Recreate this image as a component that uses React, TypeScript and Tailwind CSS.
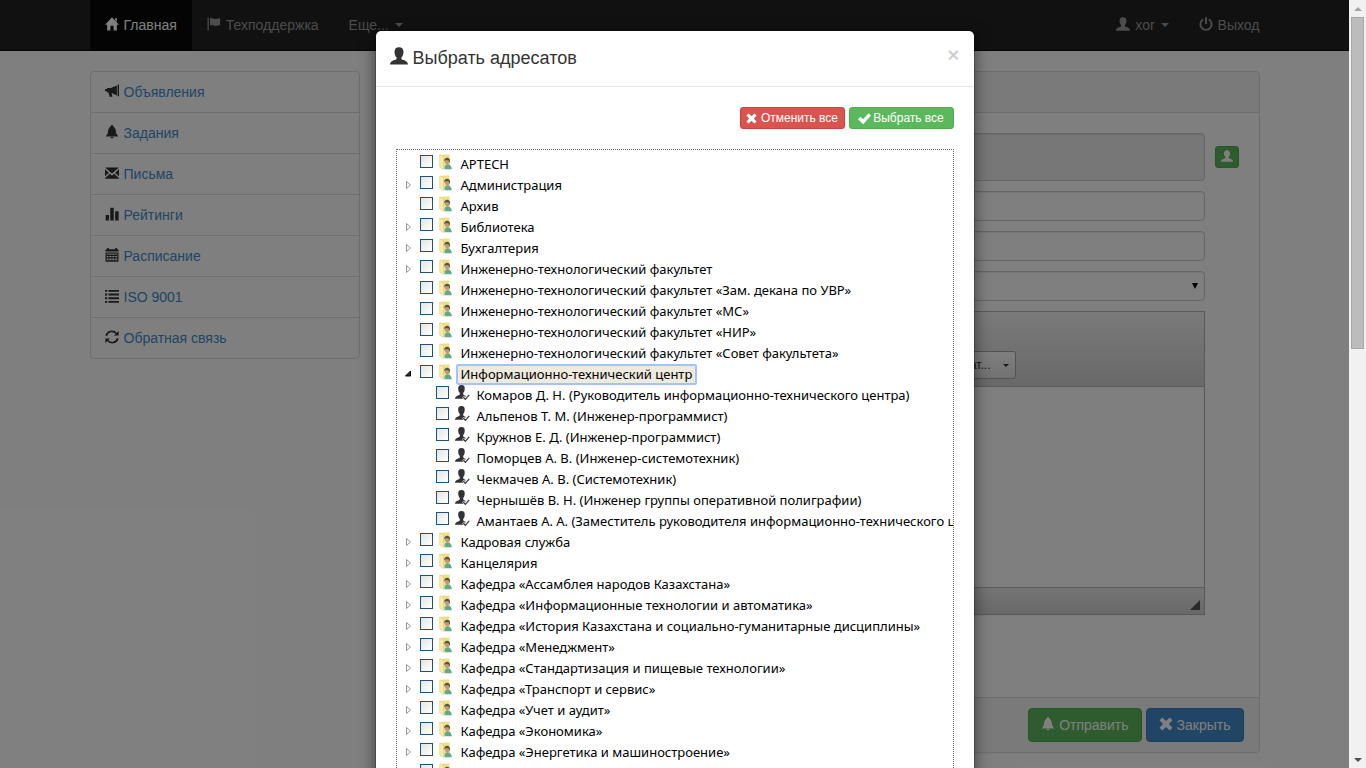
import React, { ReactNode } from "react";

const paths: Record<string, ReactNode> = {
  home: <path d="M8 0.2 16 8.8H13.6V15.4H9.8V10H6.2V15.4H2.4V8.8H0Z M11.4 1.4H13.6V5.6L11.4 3.2Z" />,
  flag: <path d="M0.6 0.5H2V15.5H0.6Z M3.4 1.4C6 0 8 3 11 2.2 12.6 1.8 13.6 1.2 15 1.6V9.6C12.6 8.8 11.6 10.8 8.6 10 6.6 9.4 5 8.6 3.4 10Z" />,
  user: <path d="M8 0.2C10.8 0.2 12 2 12 4.4 12 6.6 11.2 8.2 10.2 9.2V10.6C10.4 11.6 16 11.6 16 15.6H0C0 11.6 5.6 11.6 5.8 10.6V9.2C4.8 8.2 4 6.6 4 4.4 4 2 5.2 0.2 8 0.2Z" />,
  off: <path fill="none" stroke="currentColor" strokeWidth="2.2" d="M4.8 2.8A6.4 6.4 0 1 0 11.2 2.8M8 0.4V8" />,
  horn: <path d="M14.4 0.6H16V14H14.4Z M13.6 1.6V13L7.6 10.4 8.6 14.6H5.2L4 9.8H2.4V8.4H0V5.6H2.4V4.6H6.6Z" />,
  bell: <path d="M8 0C9 0 9.4 0.8 9.4 1.6 12.4 2.8 12.2 6.6 12.8 9 13.2 10.8 15 11.6 15.2 13H0.8C1 11.6 2.8 10.8 3.2 9 3.8 6.6 3.6 2.8 6.6 1.6 6.6 0.8 7 0 8 0ZM6.4 13.8H9.6C9.4 16 6.6 16 6.4 13.8Z" />,
  mail: <path d="M0.2 1.6H15.8L8 8.6Z M0 3.6 4.4 7.6 0 11.8Z M16 3.6V11.8L11.6 7.6Z M5.6 8.8 8 11 10.4 8.8 15.8 13.6V14.6H0.2V13.6Z" />,
  bars: <path d="M0.8 9H4.6V15.4H0.8Z M6 0.8H10V15.4H6Z M11.6 4.8H15.6V15.4H11.6Z" />,
  calendar: <path fillRule="evenodd" d="M2.4 0H4.4V1.4H11.6V0H13.6V1.4H15.4V4H0.6V1.4H2.4Z M0.6 5H15.4V15.6H0.6Z M2 6.4V7.8H4V6.4Z M5 6.4V7.8H7.4V6.4Z M8.4 6.4V7.8H10.8V6.4Z M11.8 6.4V7.8H14V6.4Z M2 9V10.6H4V9Z M5 9V10.6H7.4V9Z M8.4 9V10.6H10.8V9Z M11.8 9V10.6H14V9Z M2 12V14H4V12Z M5 12V14H7.4V12Z M8.4 12V14H10.8V12Z M11.8 12V14H14V12Z" />,
  list: <path d="M0 1H2.6V3.2H0Z M4 1H16V3.2H4Z M0 5.2H2.6V7.4H0Z M4 5.2H16V7.4H4Z M0 9.4H2.6V11.6H0Z M4 9.4H16V11.6H4Z M0 13.6H2.6V15.8H0Z M4 13.6H16V15.8H4Z" />,
  refresh: (
    <>
      <path fill="none" stroke="currentColor" strokeWidth="2" d="M1.4 6.6C2.6 1 9.6 0 13 4M14.6 9.4C13.4 15 6.4 16 3 12" />
      <path d="M15.6 1.2V6.4H10.2Z M0.4 14.8V9.6H5.8Z" />
    </>
  ),
  remove: <path d="M3.8 0.6 8 4.6 12.2 0.6 15.4 3.8 11.4 8 15.4 12.2 12.2 15.4 8 11.4 3.8 15.4 0.6 12.2 4.6 8 0.6 3.8Z" />,
  ok: <path d="M0 8.8 3 5.8 6.2 8.8 13 1.4 16 4.4 6.4 15Z" />,
};

function Icon({ name, className = "size-3.5" }: { name: string; className?: string }) {
  return (
    <svg viewBox="0 0 16 16" fill="currentColor" aria-hidden="true" className={`${className} shrink-0`}>
      {paths[name]}
    </svg>
  );
}

function Caret() {
  return <span className="ml-1.5 border-x-4 border-t-4 border-x-transparent border-t-current" />;
}

function GroupIcon() {
  return (
    <svg viewBox="0 0 16 16" className="size-4 shrink-0" aria-hidden="true">
      <path d="M2 1.4 4 0.6H10.6V13H4Z" fill="#efdf8c" />
      <path d="M0.8 0.8 4.4 2.6V15.6L0.8 13Z" fill="#f8eeb0" stroke="#dcc66a" strokeWidth="0.6" />
      <path d="M5.4 15.2C5 12 6.4 10.6 8.6 10.2 11.4 10.4 12.8 12.8 12.8 15.2Z" fill="#62a98a" />
      <ellipse cx="8.3" cy="7.6" rx="2.3" ry="2.8" fill="#c09a78" />
      <path d="M5.4 7.6C5 4.4 7 3.6 8.4 3.7 10.8 4 11.6 6 10.8 9L9.8 6.4 7 6Z" fill="#55543f" />
    </svg>
  );
}

function PersonIcon() {
  return (
    <svg viewBox="0 0 16 16" className="size-4 shrink-0" aria-hidden="true">
      <path d="M6.4 0C9 0 9.9 1.6 9.7 4 9.6 6 9 7.2 8.2 8V9.2C8.6 10 9.6 10.4 10.6 10.8L10.4 12 8.6 11 7.2 12.4 8.4 13.8H0C0 10.4 4.8 10.6 4.8 9.2V8C4 7.2 3.3 6 3.2 4 3 1.6 4 0 6.4 0Z" fill="#333" />
      <path d="M8.2 12 10.4 14.4 14.2 9.8" fill="none" stroke="#333" strokeWidth="1.2" />
    </svg>
  );
}

const menu = [
  ["horn", "Объявления"],
  ["bell", "Задания"],
  ["mail", "Письма"],
  ["bars", "Рейтинги"],
  ["calendar", "Расписание"],
  ["list", "ISO 9001"],
  ["refresh", "Обратная связь"],
];

type Kind = "leaf" | "closed" | "open" | "person";

const rows: [string, Kind][] = [
  ["APTECH", "leaf"],
  ["Администрация", "closed"],
  ["Архив", "leaf"],
  ["Библиотека", "closed"],
  ["Бухгалтерия", "closed"],
  ["Инженерно-технологический факультет", "closed"],
  ["Инженерно-технологический факультет «Зам. декана по УВР»", "leaf"],
  ["Инженерно-технологический факультет «МС»", "leaf"],
  ["Инженерно-технологический факультет «НИР»", "leaf"],
  ["Инженерно-технологический факультет «Совет факультета»", "leaf"],
  ["Информационно-технический центр", "open"],
  ["Комаров Д. Н. (Руководитель информационно-технического центра)", "person"],
  ["Альпенов Т. М. (Инженер-программист)", "person"],
  ["Кружнов Е. Д. (Инженер-программист)", "person"],
  ["Поморцев А. В. (Инженер-системотехник)", "person"],
  ["Чекмачев А. В. (Системотехник)", "person"],
  ["Чернышёв В. Н. (Инженер группы оперативной полиграфии)", "person"],
  ["Амантаев А. А. (Заместитель руководителя информационно-технического центра)", "person"],
  ["Кадровая служба", "closed"],
  ["Канцелярия", "closed"],
  ["Кафедра «Ассамблея народов Казахстана»", "closed"],
  ["Кафедра «Информационные технологии и автоматика»", "closed"],
  ["Кафедра «История Казахстана и социально-гуманитарные дисциплины»", "closed"],
  ["Кафедра «Менеджмент»", "closed"],
  ["Кафедра «Стандартизация и пищевые технологии»", "closed"],
  ["Кафедра «Транспорт и сервис»", "closed"],
  ["Кафедра «Учет и аудит»", "closed"],
  ["Кафедра «Экономика»", "closed"],
  ["Кафедра «Энергетика и машиностроение»", "closed"],
  ["", "closed"],
];

function TreeRow({ label, kind, index }: { label: string; kind: Kind; index: number }) {
  const id = `node-${index}`;
  return (
    <li className={`flex h-[21px] items-start ${kind === "person" ? "pl-[23px]" : "pl-[7px]"}`}>
      <span className="flex h-[21px] w-4 shrink-0 items-center">
        {kind === "closed" && (
          <svg viewBox="0 0 8 10" className="h-2.5 w-2" aria-hidden="true">
            <path d="M2.5 1.5 6.5 5 2.5 8.5Z" fill="#fff" stroke="#989898" />
          </svg>
        )}
        {kind === "open" && (
          <svg viewBox="0 0 8 10" className="h-2.5 w-2" aria-hidden="true">
            <path d="M6.5 2V7H1.5Z" fill="#333" stroke="#000" />
          </svg>
        )}
      </span>
      <input
        id={id}
        type="checkbox"
        className="mt-0.5 size-[13px] shrink-0 appearance-none border border-[#1c5180] bg-linear-to-br from-[#e4e4df] to-white"
      />
      <span className="ml-1.5 mt-px w-[17px] shrink-0">{kind === "person" ? <PersonIcon /> : <GroupIcon />}</span>
      <label
        htmlFor={id}
        className={`mt-px h-[21px] rounded-xs border-2 px-[3px] leading-[17px] whitespace-nowrap ${
          kind === "open" ? "border-[#a4c3fa] bg-[#eeeadd]" : "border-transparent"
        }`}
      >
        {label}
      </label>
    </li>
  );
}

function NavLink({ icon, label, active, caret }: { icon?: string; label: string; active?: boolean; caret?: boolean }) {
  return (
    <a href="#" className={`flex h-[50px] items-center px-[15px] ${active ? "bg-[#080808] text-white" : "text-[#999]"}`}>
      {icon && <span className="mr-[5px] pb-0.5"><Icon name={icon} /></span>}
      {label}
      {caret && <Caret />}
    </a>
  );
}

const field = "w-full rounded border border-[#ccc] shadow-[inset_0_1px_1px_rgba(0,0,0,0.075)]";

export default function App() {
  return (
    <div className="flex h-screen overflow-hidden bg-white font-['Liberation_Sans',sans-serif] text-sm text-[#333]">
      <div className="relative min-w-0 flex-1 overflow-hidden">
        <nav className="border-b border-[#080808] bg-[#222]">
          <div className="mx-auto flex max-w-[1170px]">
            <NavLink icon="home" label="Главная" active />
            <NavLink icon="flag" label="Техподдержка" />
            <NavLink label="Еще..." caret />
            <div className="-mr-[15px] ml-auto flex">
              <NavLink icon="user" label="xor" caret />
              <NavLink icon="off" label="Выход" />
            </div>
          </div>
        </nav>

        <div className="mx-auto mt-5 flex max-w-[1170px] items-start gap-[30px]">
          <ul className="w-[270px] shrink-0 divide-y divide-[#ddd] rounded border border-[#ddd]">
            {menu.map(([icon, label]) => (
              <li key={label}>
                <a href="#" className="flex h-10 items-center gap-[5px] px-3.5 text-[#428bca]">
                  <span className="pb-0.5 text-[#333]"><Icon name={icon} /></span>
                  {label}
                </a>
              </li>
            ))}
          </ul>

          <form className="min-w-0 flex-1 rounded border border-[#ddd] shadow-xs">
            <div className="h-[41px] rounded-t border-b border-[#ddd] bg-[#f5f5f5]" />
            <div className="flex gap-2.5 px-5 pt-5 pb-[82px]">
              <div className="flex min-w-0 flex-1 flex-col gap-2.5">
                <textarea aria-label="Адресаты" readOnly className={`${field} block h-12 resize-none bg-[#eee]`} />
                <input aria-label="Тема" className={`${field} h-[30px]`} />
                <input aria-label="Ссылка" className={`${field} h-[30px]`} />
                <div className="relative">
                  <select aria-label="Тип" className={`${field} block h-[30px] appearance-none`} />
                  <svg viewBox="0 0 6 6" className="absolute top-3 right-[7px] size-1.5" aria-hidden="true">
                    <path d="M0 0H6L3 6Z" />
                  </svg>
                </div>
                <div className="border border-[#b6b6b6] shadow-xs">
                  <div className="flex h-[75px] items-end justify-end border-b border-[#b6b6b6] bg-linear-to-b from-[#f5f5f5] to-[#cfd1cf] pr-[188px] pb-[7px]">
                    <button type="button" className="flex h-7 w-24 items-center justify-end rounded-[3px] border border-[#a6a6a6] bg-linear-to-b from-white to-[#e4e4e4] pr-1.5 text-xs">
                      Формат...
                      <span className="ml-3 border-x-3 border-t-3 border-x-transparent border-t-[#333]" />
                    </button>
                  </div>
                  <textarea aria-label="Сообщение" className="block h-[200px] w-full resize-none" />
                  <div className="flex h-[27px] items-end justify-end border-t border-[#b6b6b6] bg-linear-to-b from-[#ebebeb] to-[#cfd1cf] p-1">
                    <svg viewBox="0 0 10 10" className="size-2.5" aria-hidden="true">
                      <path d="M10 0V10H0Z" fill="#555" />
                    </svg>
                  </div>
                </div>
              </div>
              <div className="w-6 shrink-0 pt-[13px]">
                <button type="button" aria-label="Выбрать адресатов" className="flex h-[22px] w-6 items-center justify-center rounded-[3px] border border-[#4cae4c] bg-[#5cb85c] pb-0.5 text-white">
                  <Icon name="user" className="size-3" />
                </button>
              </div>
            </div>
            <div className="flex justify-end gap-1 rounded-b border-t border-[#ddd] bg-[#f5f5f5] py-2.5 pr-[15px]">
              <button type="button" className="flex h-[34px] items-center gap-1 rounded border border-[#4cae4c] bg-[#5cb85c] px-3 text-white">
                <span className="pb-0.5"><Icon name="bell" /></span>
                Отправить
              </button>
              <button type="button" className="flex h-[34px] items-center gap-1 rounded border border-[#357ebd] bg-[#428bca] px-3 text-white">
                <span className="pb-0.5"><Icon name="remove" className="size-3.5" /></span>
                Закрыть
              </button>
            </div>
          </form>
        </div>

        <div className="absolute inset-0 overflow-hidden bg-black/50">
          <section role="dialog" aria-label="Выбрать адресатов" className="mx-auto mt-[30px] max-w-[600px] rounded-md border border-black/20 bg-white bg-clip-padding shadow-[0_5px_15px_rgba(0,0,0,0.5)]">
            <header className="flex h-14 items-center border-b border-[#e5e5e5] px-3.5 pb-0.5">
              <h4 className="flex items-center gap-[5px] text-lg leading-6">
                <span className="pb-1"><Icon name="user" className="size-[18px]" /></span>
                Выбрать адресатов
              </h4>
              <button type="button" aria-label="Закрыть" className="ml-auto pb-1.5 text-[21px] leading-5 font-bold text-black/20">
                ×
              </button>
            </header>
            <div className="p-5">
              <div className="flex justify-end gap-1 text-xs text-white">
                <button type="button" className="flex h-[22px] w-[105px] items-center justify-center gap-1 rounded-[3px] border border-[#d43f3a] bg-[#d9534f]">
                  <Icon name="remove" className="size-[11px]" />
                  Отменить все
                </button>
                <button type="button" className="flex h-[22px] w-[105px] items-center justify-center gap-0.5 rounded-[3px] border border-[#4cae4c] bg-[#5cb85c]">
                  <Icon name="ok" className="size-[13px]" />
                  Выбрать все
                </button>
              </div>
              <ul className="mt-5 overflow-hidden border border-dotted border-[#666] pt-[3px] font-['Noto_Sans',sans-serif] text-[13px] text-black">
                {rows.map(([label, kind], i) => (
                  <TreeRow key={i} label={label} kind={kind} index={i} />
                ))}
              </ul>
            </div>
          </section>
        </div>
      </div>

      <div className="flex w-[17px] shrink-0 flex-col items-center bg-[#f1f1f1]" aria-hidden="true">
        <div className="flex h-[17px] items-center">
          <span className="border-x-4 border-b-4 border-x-transparent border-b-[#a3a3a3]" />
        </div>
        <div className="h-[332px] w-[13px] border border-[#a8a8a8] bg-[#bcbcbc]" />
        <div className="mt-auto flex h-[17px] items-center">
          <span className="border-x-4 border-t-4 border-x-transparent border-t-[#505050]" />
        </div>
      </div>
    </div>
  );
}
